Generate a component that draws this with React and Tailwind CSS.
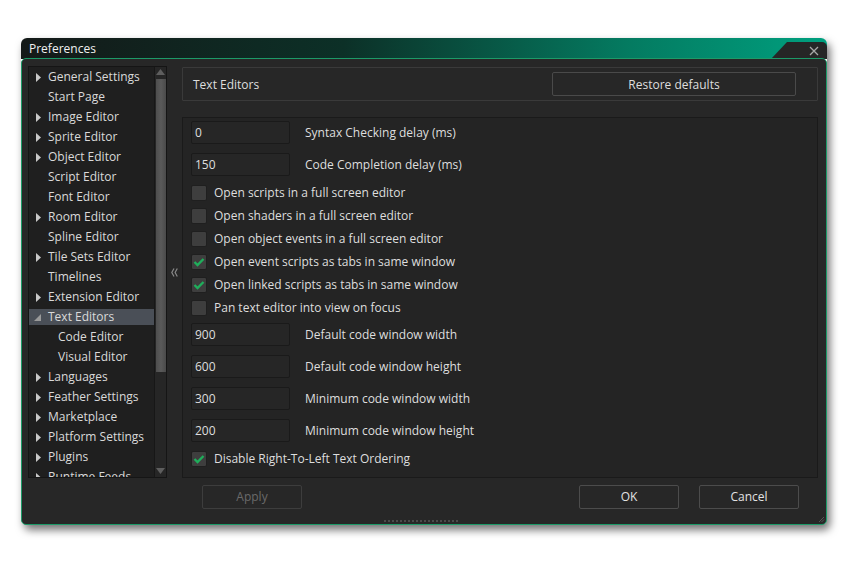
import React from 'react';

const TREE = [
  { label: 'General Settings', arrow: true },
  { label: 'Start Page' },
  { label: 'Image Editor', arrow: true },
  { label: 'Sprite Editor', arrow: true },
  { label: 'Object Editor', arrow: true },
  { label: 'Script Editor' },
  { label: 'Font Editor' },
  { label: 'Room Editor', arrow: true },
  { label: 'Spline Editor' },
  { label: 'Tile Sets Editor', arrow: true },
  { label: 'Timelines' },
  { label: 'Extension Editor', arrow: true },
  { label: 'Text Editors', open: true, selected: true },
  { label: 'Code Editor', sub: true },
  { label: 'Visual Editor', sub: true },
  { label: 'Languages', arrow: true },
  { label: 'Feather Settings', arrow: true },
  { label: 'Marketplace', arrow: true },
  { label: 'Platform Settings', arrow: true },
  { label: 'Plugins', arrow: true },
  { label: 'Runtime Feeds', arrow: true },
];

const ROWS = [
  { type: 'input', value: '0', label: 'Syntax Checking delay (ms)' },
  { type: 'input', value: '150', label: 'Code Completion delay (ms)' },
  { type: 'check', label: 'Open scripts in a full screen editor' },
  { type: 'check', label: 'Open shaders in a full screen editor' },
  { type: 'check', label: 'Open object events in a full screen editor' },
  { type: 'check', checked: true, label: 'Open event scripts as tabs in same window' },
  { type: 'check', checked: true, label: 'Open linked scripts as tabs in same window' },
  { type: 'check', label: 'Pan text editor into view on focus' },
  { type: 'input', value: '900', label: 'Default code window width' },
  { type: 'input', value: '600', label: 'Default code window height' },
  { type: 'input', value: '300', label: 'Minimum code window width' },
  { type: 'input', value: '200', label: 'Minimum code window height' },
  { type: 'check', checked: true, label: 'Disable Right-To-Left Text Ordering' },
];

function TreeRow({ item }) {
  return (
    <div className="h-[20px] flex items-center">
      <div
        className={`h-[16px] w-full flex items-center ${item.selected ? 'bg-[#4a4f57]' : ''}`}
      >
        <div className="w-[19px] flex justify-end pr-[7px] shrink-0">
          {item.arrow && (
            <svg width="5" height="9" viewBox="0 0 5 9">
              <polygon points="0,0 5,4.5 0,9" fill="#c9c9c9" />
            </svg>
          )}
          {item.open && (
            <svg width="7" height="7" viewBox="0 0 7 7">
              <polygon points="7,0 7,7 0,7" fill="#9a9a9a" />
            </svg>
          )}
        </div>
        <span className={`whitespace-nowrap text-[#dadada] ${item.sub ? 'pl-[10px]' : ''}`}>
          {item.label}
        </span>
      </div>
    </div>
  );
}

function Checkbox({ checked }) {
  return (
    <div className="w-[16px] h-[16px] rounded-[2px] bg-[#3e3e3e] border border-[#1f1f1f] flex items-center justify-center">
      {checked && (
        <svg width="12" height="10" viewBox="0 0 12 10">
          <polyline points="1.5,5 4.5,8 10.5,2" fill="none" stroke="#1fae5b" strokeWidth="2.4" />
        </svg>
      )}
    </div>
  );
}

function Button({ children, disabled }) {
  return (
    <div
      className={`w-[100px] h-[24px] rounded-[2px] border flex items-center justify-center ${
        disabled ? 'border-[#3d3d3d] text-[#6a6a6a]' : 'border-[#4c4c4c] text-[#e2e2e2]'
      }`}
    >
      {children}
    </div>
  );
}

export default function App() {
  return (
    <div
      className="w-[861px] h-[566px] bg-white pt-[38px] pl-[21px] text-[12px] leading-none"
      style={{ fontFamily: '"Open Sans", "Noto Sans", sans-serif' }}
    >
      <div className="w-[806px] h-[487px] flex flex-col rounded-[6px] shadow-[3px_5px_8px_rgba(0,0,0,0.55)]">
        {/* title bar */}
        <div className="relative h-[21px] shrink-0 rounded-t-[6px] bg-[linear-gradient(to_right,#141918_0%,#0c3027_40%,#047a60_75%,#00a07f_100%)] flex items-center pl-[8px] text-[#f0f0f0] -mb-[1px]">
          Preferences
          <div className="absolute right-0 top-[4px] bottom-0 w-[56px] bg-[#262626] rounded-tr-[5px] [clip-path:polygon(16px_0,100%_0,100%_100%,0_100%)] flex items-center justify-end pr-[8px] pt-[1px]">
            <svg width="10" height="10" viewBox="0 0 10 10">
              <path d="M1 1 L9 9 M9 1 L1 9" stroke="#a8a8a8" strokeWidth="1.3" />
            </svg>
          </div>
        </div>

        {/* body */}
        <div className="relative flex-1 flex flex-col bg-[#272727] border border-[#1c9a68] rounded-[5px] pt-[7px] pl-[6px] pr-[7px]">
          <div className="flex h-[412px]">
            {/* tree */}
            <div className="w-[139px] h-full bg-[#1f1f1f] border border-[#151515] flex overflow-hidden">
              <div className="flex-1 overflow-hidden">
                {TREE.map((item) => (
                  <TreeRow key={item.label} item={item} />
                ))}
              </div>
              <div className="w-[12px] bg-[#262626] border-l border-[#171717] flex flex-col items-center">
                <svg className="mt-[2px]" width="9" height="6" viewBox="0 0 9 6">
                  <polygon points="0,6 4.5,0 9,6" fill="#5e5e5e" />
                </svg>
                <div className="mt-[4px] w-[10px] h-[293px] bg-[linear-gradient(to_right,#4e4e4e,#5a5a5a,#4a4a4a)]" />
                <div className="flex-1" />
                <svg className="mb-[3px]" width="9" height="6" viewBox="0 0 9 6">
                  <polygon points="0,0 9,0 4.5,6" fill="#5e5e5e" />
                </svg>
              </div>
            </div>

            {/* collapse */}
            <div className="w-[15px] flex items-center justify-center">
              <svg width="7" height="9" viewBox="0 0 7 9">
                <path d="M3 0.5 L0.8 4.5 L3 8.5 M6.3 0.5 L4.1 4.5 L6.3 8.5" fill="none" stroke="#8a8a8a" strokeWidth="1.2" />
              </svg>
            </div>

            {/* right */}
            <div className="w-[636px] flex flex-col">
              <div className="mt-[1px] h-[34px] border border-[#3a3a3a] rounded-[1px] flex items-center pl-[10px] pr-[21px] text-[#dedede]">
                <span className="flex-1 pt-[1px]">Text Editors</span>
                <div className="w-[244px] h-[24px] border border-[#4a4a4a] rounded-[2px] flex items-center justify-center pt-[1px]">
                  Restore defaults
                </div>
              </div>
              <div className="mt-[16px] flex-1 bg-[#242424] border border-[#1a1a1a] pt-[3px] pl-[8px]">
                {ROWS.map((row) =>
                  row.type === 'input' ? (
                    <div key={row.label} className="h-[32px] flex items-start">
                      <div className="w-[99px] h-[23px] bg-[#262626] border border-[#1a1a1a] rounded-[2px] flex items-center pl-[3px] text-[#dedede]">
                        {row.value}
                      </div>
                      <div className="ml-[15px] h-[23px] flex items-center text-[#dedede]">{row.label}</div>
                    </div>
                  ) : (
                    <div key={row.label} className="h-[23px] flex items-start">
                      <Checkbox checked={row.checked} />
                      <div className="ml-[7px] h-[16px] flex items-center text-[#dedede]">{row.label}</div>
                    </div>
                  )
                )}
              </div>
            </div>
          </div>

          {/* buttons */}
          <div className="flex mt-[7px]">
            <div className="ml-[174px]">
              <Button disabled>Apply</Button>
            </div>
            <div className="flex-1" />
            <Button>OK</Button>
            <div className="w-[20px]" />
            <Button>Cancel</Button>
            <div className="w-[20px]" />
          </div>

          {/* resize grips */}
          <div className="absolute bottom-[2px] left-[362px] flex gap-[2px]">
            {Array.from({ length: 19 }).map((_, i) => (
              <div key={i} className="w-[2px] h-[2px] bg-[#4a4a4a]" />
            ))}
          </div>
          <svg className="absolute right-[1px] bottom-[1px]" width="7" height="7" viewBox="0 0 7 7">
            <path d="M6 1 L1 6 M6 3.5 L3.5 6" stroke="#555" strokeWidth="1" />
          </svg>
        </div>
      </div>
    </div>
  );
}
